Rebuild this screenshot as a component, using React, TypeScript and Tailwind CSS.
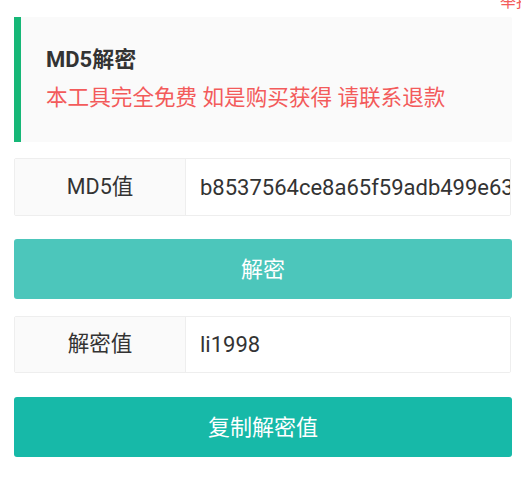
import React from 'react';

const font = { fontFamily: 'Roboto, "Noto Sans CJK SC", sans-serif' };

const Field: React.FC<{ label: string; value: string; className?: string }> = ({ label, value, className }) => (
  <div className={`flex h-[58px] border border-[#eeeeee] rounded-[2px] overflow-hidden ${className ?? ''}`}>
    <div className="w-[171px] shrink-0 flex items-center justify-center bg-[#fafafa] border-r border-[#eeeeee] text-[21.5px] text-[#333]">
      {label}
    </div>
    <div className="flex-1 min-w-0 flex items-center pl-[14px] bg-white text-[22px] text-[#333] whitespace-nowrap overflow-hidden">
      {value}
    </div>
  </div>
);

export default function App() {
  return (
    <div className="relative w-[521px] h-[478px] bg-white overflow-hidden pl-[14px] pr-[9px]" style={font}>
      <span className="absolute left-[500px] top-[-10px] text-[16px] text-[#f35b5b] whitespace-nowrap">举报</span>

      <div className="mt-[17px] bg-[#fafafa] border-l-[7px] border-[#16b777] rounded-r-[2px] pl-[25px] pt-[28px] pb-[29px]">
        <div className="text-[22px] leading-[30px] font-bold text-[#333]">MD5解密</div>
        <div className="mt-[8px] text-[21.6px] leading-[30px] text-[#f35b5b] whitespace-nowrap">
          本工具完全免费 如是购买获得 请联系退款
        </div>
      </div>

      <Field className="mt-[16px] mr-[1px]" label="MD5值" value="b8537564ce8a65f59adb499e6315a1f2" />

      <button className="mt-[23px] w-full h-[60px] rounded-[3px] bg-[#4cc6bb] text-white text-[22px]">解密</button>

      <Field className="mt-[17px] mr-[1px] !h-[57px]" label="解密值" value="li1998" />

      <button className="mt-[24px] w-full h-[60px] rounded-[3px] bg-[#17b9a8] text-white text-[22px]">复制解密值</button>
    </div>
  );
}
